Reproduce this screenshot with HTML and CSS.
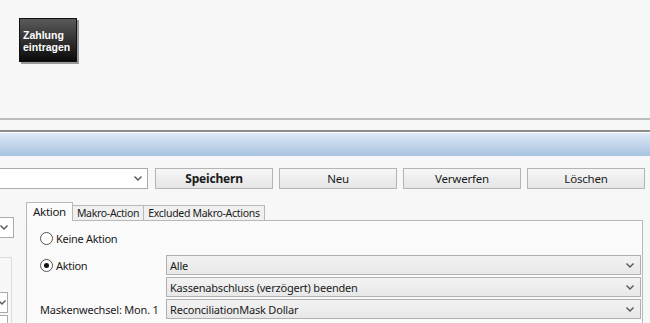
FILE: index.html
```html
<!doctype html>
<html lang="de">
<head>
    <meta charset="UTF-8">
    <title>Aktionen</title>
    <link rel="stylesheet" href="styles.css">
</head>
<body>

<div class="top">
    <div class="tile">Zahlung<br>eintragen</div>
</div>
<div class="sep-light"></div>
<div class="sep-dark"></div>
<div class="header"></div>

<div class="toolbar">
    <div class="combo combo-main">
        <svg class="chev" width="8" height="5" viewBox="0 0 8 5"><path d="M0.5 0.5 L4 4 L7.5 0.5" fill="none" stroke="#555" stroke-width="1.4"/></svg>
    </div>
    <div class="btn bold">Speichern</div>
    <div class="btn">Neu</div>
    <div class="btn">Verwerfen</div>
    <div class="btn">Löschen</div>
</div>

<div class="main">
    <div class="side">
        <div class="side-inner">
            <div class="combo combo-side">
                <svg class="chev" width="8" height="5" viewBox="0 0 8 5"><path d="M0.5 0.5 L4 4 L7.5 0.5" fill="none" stroke="#555" stroke-width="1.4"/></svg>
            </div>
            <div class="group">
                <div class="combo combo-small">
                    <svg class="chev" width="8" height="5" viewBox="0 0 8 5"><path d="M0.5 0.5 L4 4 L7.5 0.5" fill="none" stroke="#555" stroke-width="1.4"/></svg>
                </div>
                <div class="combo combo-small plain"></div>
            </div>
        </div>
    </div>

    <div class="tabs">
        <div class="tab-row">
            <div class="tab active">Aktion</div>
            <div class="tab">Makro-Action</div>
            <div class="tab">Excluded Makro-Actions</div>
        </div>
        <div class="panel">
            <div class="row first">
                <label class="radio"><span class="dot"></span>Keine Aktion</label>
            </div>
            <div class="row">
                <label class="radio lbl"><span class="dot on"></span>Aktion</label>
                <div class="select">
                    <span>Alle</span>
                    <svg class="chev" width="8" height="5" viewBox="0 0 8 5"><path d="M0.5 0.5 L4 4 L7.5 0.5" fill="none" stroke="#555" stroke-width="1.4"/></svg>
                </div>
            </div>
            <div class="row tight">
                <span class="lbl"></span>
                <div class="select">
                    <span>Kassenabschluss (verzögert) beenden</span>
                    <svg class="chev" width="8" height="5" viewBox="0 0 8 5"><path d="M0.5 0.5 L4 4 L7.5 0.5" fill="none" stroke="#555" stroke-width="1.4"/></svg>
                </div>
            </div>
            <div class="row tight">
                <span class="lbl">Maskenwechsel: Mon. 1</span>
                <div class="select">
                    <span>ReconciliationMask Dollar</span>
                    <svg class="chev" width="8" height="5" viewBox="0 0 8 5"><path d="M0.5 0.5 L4 4 L7.5 0.5" fill="none" stroke="#555" stroke-width="1.4"/></svg>
                </div>
            </div>
        </div>
    </div>
</div>

</body>
</html>
```

FILE: styles.css
```css
body {
    margin: 0;
    padding: 0;
    background: #f7f7f7;
    font-family: "Noto Sans", "Open Sans", sans-serif;
    font-size: 11px;
    letter-spacing: -0.2px;
    color: #1a1a1a;
    height: 323px;
    overflow: hidden;
}

.top {
    height: 118px;
    box-sizing: border-box;
    padding: 18px 0 0 19px;
}

.tile {
    width: 58px;
    height: 44px;
    box-sizing: border-box;
    padding: 10px 0 0 3px;
    background: linear-gradient(#5a5a5a, #0a0a0a);
    border: 1px solid #111;
    box-shadow: 2px 2px 0 #9a9a9a;
    color: #fff;
    font-family: "Liberation Sans", sans-serif;
    font-weight: bold;
    font-size: 10.5px;
    letter-spacing: 0;
    line-height: 12px;
}

.sep-light {
    height: 2px;
    background: #bdbdbd;
    margin-bottom: 10px;
}

.sep-dark {
    height: 2px;
    background: #8c8c8c;
    border-bottom: 1px solid #fff;
}

.header {
    height: 23px;
    background: linear-gradient(#dde9f6, #a8c3e0);
}

.toolbar {
    display: flex;
    gap: 6px;
    margin-top: 12px;
    height: 21px;
}

.combo {
    display: flex;
    align-items: center;
    justify-content: flex-end;
    box-sizing: border-box;
    height: 21px;
    background: #fff;
    border: 1px solid #ababab;
    padding-right: 5px;
}

.combo-main {
    width: 160px;
    margin-left: -12px;
    margin-right: 1px;
}

.btn {
    width: 118px;
    box-sizing: border-box;
    border: 1px solid #b4b4b4;
    background: linear-gradient(#f6f6f6, #e6e6e6);
    display: flex;
    align-items: center;
    justify-content: center;
    font-size: 11.5px;
}

.bold {
    font-weight: bold;
    font-size: 12px;
}

.main {
    display: flex;
    margin-top: 13px;
}

.side {
    width: 26px;
    overflow: hidden;
    flex: none;
}

.side-inner {
    margin-left: -40px;
    padding-top: 15px;
}

.combo-side {
    width: 54px;
}

.group {
    margin-top: 19px;
    width: 52px;
    height: 70px;
    box-sizing: border-box;
    border: 1px solid #dcdcdc;
    padding-top: 34px;
}

.combo-small {
    width: 47px;
    padding-right: 1px;
}

.plain {
    margin-top: 2px;
}

.tabs {
    width: 617px;
}

.tab-row {
    display: flex;
    align-items: flex-end;
    height: 18px;
}

.tab {
    box-sizing: border-box;
    height: 15px;
    border: 1px solid #b8b8b8;
    border-bottom: none;
    background: #f0f0f0;
    padding: 0 4px;
    line-height: 14px;
    margin-left: -1px;
    font-size: 10.5px;
    letter-spacing: -0.3px;
}

.tab.active {
    height: 19px;
    margin-left: 0;
    margin-bottom: -1px;
    background: #fbfbfb;
    padding: 0 6px;
    line-height: 17px;
    position: relative;
    z-index: 1;
    font-size: 11.5px;
}

.panel {
    border: 1px solid #b8b8b8;
    border-bottom: none;
    background: #fafafa;
    height: 103px;
    padding: 7px 1px 0 13px;
}

.row {
    display: flex;
    align-items: center;
    height: 20px;
    margin-top: 7px;
}

.row.first {
    margin-top: 0;
}

.row.tight {
    margin-top: 2px;
}

.lbl {
    width: 126px;
    flex: none;
}

.radio {
    display: flex;
    align-items: center;
    letter-spacing: -0.3px;
}

.dot {
    width: 11px;
    height: 11px;
    border: 1px solid #555;
    border-radius: 50%;
    background: #fff;
    margin-right: 3px;
    position: relative;
}

.dot.on::after {
    content: '';
    position: absolute;
    left: 3px;
    top: 3px;
    width: 5px;
    height: 5px;
    border-radius: 50%;
    background: #111;
}

.select {
    flex: 1;
    height: 20px;
    box-sizing: border-box;
    border: 1px solid #b0b0b0;
    background: linear-gradient(#f2f2f2, #e8e8e8);
    display: flex;
    align-items: center;
    justify-content: space-between;
    padding: 0 6px 0 3px;
}
```
